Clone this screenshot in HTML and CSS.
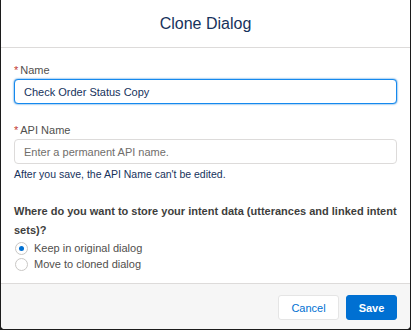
FILE: index.html
```html
<!DOCTYPE html>
<html lang="en">
<head>
  <meta charset="UTF-8">
  <meta name="viewport" content="width=device-width, initial-scale=1.0">
  <title>Clone Dialog</title>
  <link rel="stylesheet" href="styles.css">
</head>
<body>

<div class="dialog">
  <div class="header">Clone Dialog</div>

  <div class="content">
    <label class="label"><span class="req">*</span>Name</label>
    <input class="input focused" type="text" value="Check Order Status Copy">

    <label class="label second"><span class="req">*</span>API Name</label>
    <input class="input" type="text" placeholder="Enter a permanent API name.">
    <div class="help">After you save, the API Name can't be edited.</div>

    <div class="question">Where do you want to store your intent data (utterances and linked intent sets)?</div>
    <div class="radio-row"><span class="radio checked"></span>Keep in original dialog</div>
    <div class="radio-row"><span class="radio"></span>Move to cloned dialog</div>
  </div>

  <div class="footer">
    <button class="btn cancel">Cancel</button>
    <button class="btn save">Save</button>
  </div>
</div>

</body>
</html>
```

FILE: styles.css
```css
body {
  margin: 0;
  background: #1c1c1c;
  font-family: 'Liberation Sans', Arial, sans-serif;
}
.dialog {
  width: 409px;
  height: 329px;
  margin: 0 1px;
  background: #fff;
  border-radius: 0 0 4px 4px;
  overflow: hidden;
  display: flex;
  flex-direction: column;
}
.header {
  height: 47px;
  display: flex;
  align-items: center;
  justify-content: center;
  border-bottom: 1px solid #dddbda;
  font-size: 16px;
  color: #16325c;
}
.content {
  padding: 14px 13px 11px 13px;
  flex: 1;
}
.label {
  display: block;
  font-size: 11px;
  line-height: 16px;
  color: #514f4d;
  margin-bottom: 1px;
}
.label.second {
  margin-top: 18px;
}
.req {
  color: #c23934;
  margin-right: 2px;
}
.input {
  display: block;
  box-sizing: border-box;
  width: 100%;
  height: 25px;
  margin: 0;
  padding: 0 9px;
  border: 1px solid #dddbda;
  border-radius: 4px;
  font-family: inherit;
  font-size: 11px;
  color: #16325c;
  outline: none;
}
.input::placeholder {
  color: #706e6b;
}
.input.focused {
  border-color: #1589ee;
  box-shadow: 0 0 2px #0070d2;
}
.help {
  margin-top: 3px;
  font-size: 10.5px;
  line-height: 15px;
  color: #16325c;
}
.question {
  margin-top: 20px;
  font-size: 11px;
  line-height: 19px;
  font-weight: bold;
  color: #3e3e3c;
}
.radio-row {
  display: flex;
  align-items: center;
  height: 16px;
  font-size: 11px;
  color: #514f4d;
}
.radio {
  box-sizing: border-box;
  width: 13px;
  height: 13px;
  border: 1px solid #c9c7c5;
  border-radius: 50%;
  margin-left: 1px;
  margin-right: 6px;
  display: flex;
  align-items: center;
  justify-content: center;
}
.radio.checked::after {
  content: "";
  width: 5px;
  height: 5px;
  border-radius: 50%;
  background: #0070d2;
}
.footer {
  height: 46px;
  box-sizing: border-box;
  border-top: 1px solid #dddbda;
  background: #f6f6f6;
  display: flex;
  justify-content: flex-end;
  align-items: flex-start;
  gap: 7px;
  padding: 11px 13px 0 0;
}
.btn {
  height: 25px;
  border-radius: 3px;
  font-family: inherit;
  font-size: 11px;
  padding: 0;
}
.cancel {
  width: 61px;
  background: #fff;
  border: 1px solid #e5e5e5;
  color: #0070d2;
}
.save {
  width: 51px;
  background: #0070d2;
  border: 1px solid #0070d2;
  color: #fff;
  font-weight: bold;
}
```
